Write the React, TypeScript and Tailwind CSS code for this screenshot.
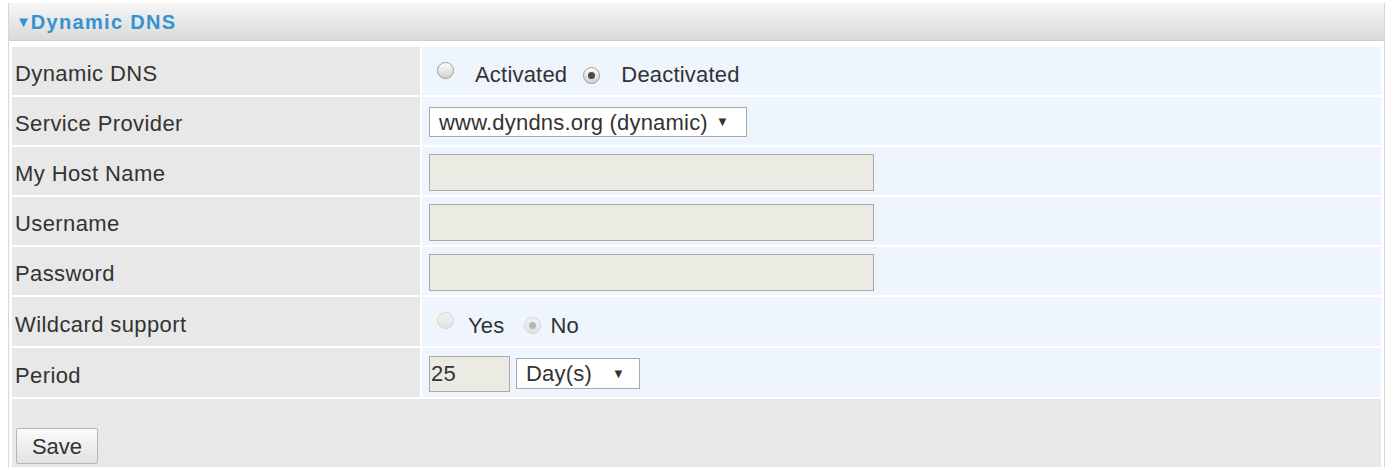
import type { ReactNode } from 'react';

function Radio({ checked, disabled }: { checked?: boolean; disabled?: boolean }) {
	return (
		<span
			className={
				'inline-flex size-[17px] shrink-0 items-center justify-center rounded-full border ' +
				(disabled
					? 'border-[#d4d4d4] bg-gradient-to-b from-[#f2f2f2] to-[#e2e2e2]'
					: 'border-[#9c9c9c] bg-gradient-to-b from-[#fdfdfd] to-[#d2d2d2]')
			}
		>
			{checked && (
				<span className={'size-[7px] rounded-full ' + (disabled ? 'bg-[#b4b4b4]' : 'bg-[#4a4a4a]')} />
			)}
		</span>
	);
}

function Row({ label, children, h = 'h-[48px]' }: { label: string; children: ReactNode; h?: string }) {
	return (
		<div className={'flex gap-[2px] ' + h}>
			<div className="flex w-[408px] shrink-0 items-center bg-[#e8e8e8] pl-[3px] pt-[5px] tracking-[0.4px]">
				{label}
			</div>
			<div className="flex flex-1 items-center bg-[#eef5fc] pl-[7px] pt-[2px] tracking-[0.2px]">{children}</div>
		</div>
	);
}

function TextBox() {
	return <div className="h-[37px] w-[445px] border border-[#a9a9a9] bg-[#ebebe4]" />;
}

export default function App() {
	return (
		<div
			className="h-[470px] w-[1393px] bg-white px-[8px] pt-[3px] text-[22px] text-[#333]"
			style={{ fontFamily: '"Liberation Sans", Arial, sans-serif' }}
		>
			<div className="flex h-[464px] flex-col border-x border-[#d6d6d6]">
				<div className="flex h-[38px] items-center border-b border-[#cfcfcf] bg-gradient-to-b from-[#f6f6f6] to-[#dadada] pl-[7px]">
					<span className="text-[15px] leading-none text-[#3592d2]">▼</span>
					<span className="text-[20px] font-bold tracking-[1.3px] text-[#3592d2]">Dynamic DNS</span>
				</div>
				<div className="flex flex-1 flex-col gap-[2px] px-[3px] pt-[6px]">
					<Row label="Dynamic DNS">
						<span className="mb-[2px] ml-[8px]">
							<Radio />
						</span>
						<span className="ml-[21px] pt-[5px]">Activated</span>
						<span className="mb-[2px] ml-[16px]">
							<Radio checked />
						</span>
						<span className="ml-[21px] pt-[5px]">Deactivated</span>
					</Row>
					<Row label="Service Provider">
						<div className="flex h-[30px] w-[318px] items-center justify-between border border-[#a9a9a9] bg-white pl-[9px] pr-[17px]">
							<span>www.dyndns.org (dynamic)</span>
							<span className="text-[13px]">▼</span>
						</div>
					</Row>
					<Row label="My Host Name">
						<TextBox />
					</Row>
					<Row label="Username">
						<TextBox />
					</Row>
					<Row label="Password">
						<TextBox />
					</Row>
					<Row label="Wildcard support" h="h-[49px]">
						<span className="mb-[2px] ml-[8px]">
							<Radio disabled />
						</span>
						<span className="ml-[14px] pt-[5px]">Yes</span>
						<span className="mb-[2px] ml-[19px]">
							<Radio checked disabled />
						</span>
						<span className="ml-[10px] pt-[5px]">No</span>
					</Row>
					<Row label="Period" h="h-[49px]">
						<div className="flex h-[36px] w-[81px] items-center border border-[#a9a9a9] bg-[#ebebe4] pl-[1px]">25</div>
						<div className="ml-[6px] flex h-[31px] w-[124px] items-center justify-between border border-[#a9a9a9] bg-white pl-[9px] pr-[14px]">
							<span>Day(s)</span>
							<span className="text-[13px]">▼</span>
						</div>
					</Row>
					<div className="flex flex-1 items-end bg-[#e8e8e8] pb-[3px] pl-[4px]">
						<button className="h-[36px] w-[82px] rounded-[2px] border border-[#b5b5b5] bg-gradient-to-b from-[#fbfbfb] to-[#e2e2e2] text-[22px] text-[#333]">
							Save
						</button>
					</div>
				</div>
			</div>
		</div>
	);
}
